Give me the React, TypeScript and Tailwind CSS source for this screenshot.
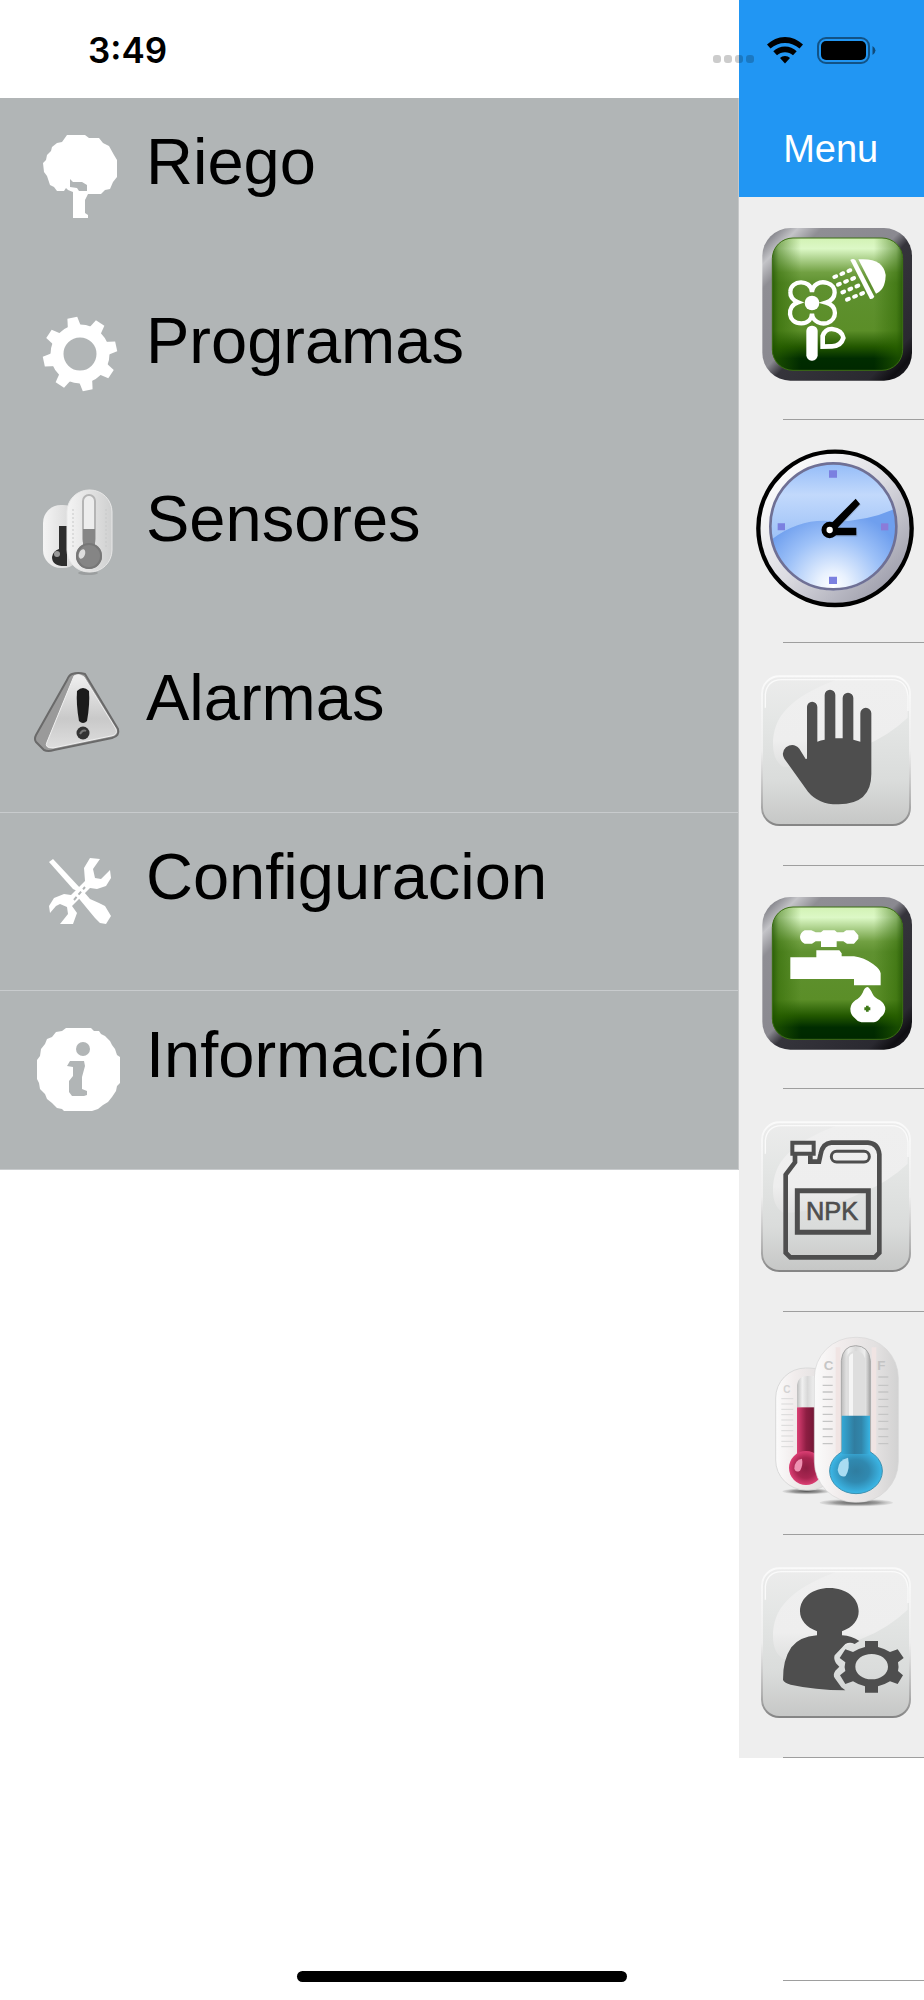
import React from 'react';

const toothAngles = [-12, 33, 78, 123, 168, 213, 258, 303];

function TreeIcon() {
  return (
    <svg viewBox="0 0 96 96" className="size-24 shrink-0" aria-hidden="true">
      <path
        fill="#fff"
        fillRule="evenodd"
        d="M37 9H55L59 12H69L73 17L79 20L84 29L87 34V51L83 56L80 63L75 64L71 68H62L58 68L55 74V87L58 89V92H43V66L38 64L36 62L34 65H27L24 61L20 59L17 50L14 46L13 37L16 34L17 29L21 25L22 21L27 17L32 16ZM40 53L43 56H52L57 59V65H49L47 62L40 61Z"
      />
    </svg>
  );
}

function GearIcon() {
  return (
    <svg viewBox="0 0 96 96" className="size-24 shrink-0" aria-hidden="true">
      <circle cx="50" cy="49" r="23" fill="none" stroke="#fff" strokeWidth="13" />
      {toothAngles.map((angle) => (
        <path key={angle} d="M43 24L45 12H55L57 24Z" fill="#fff" transform={`rotate(${angle} 50 49)`} />
      ))}
    </svg>
  );
}

function ThermometerIcon() {
  return (
    <svg viewBox="0 0 96 96" className="size-24 shrink-0" aria-hidden="true">
      <defs>
        <linearGradient id="grayBody" x1="0" x2="1">
          <stop offset="0" stopColor="#f4f4f4" />
          <stop offset="0.5" stopColor="#e2e2e2" />
          <stop offset="1" stopColor="#cfd0d0" />
        </linearGradient>
      </defs>
      <rect x="13" y="22" width="38" height="63" rx="18" fill="url(#grayBody)" />
      <path d="M29 43H37V83Q22 84 22 74Q23 68 29 66Z" fill="#2e2e2e" />
      <circle cx="27" cy="71" r="3" fill="#999" />
      <ellipse cx="58" cy="90" rx="10" ry="2" fill="#9b9e9f" />
      <rect x="37" y="7" width="45" height="82" rx="22" fill="url(#grayBody)" stroke="#e8e8e8" />
      <path d="M43 26V64M76 26V64" stroke="#c7c8c8" strokeDasharray="2 2" />
      <rect x="53" y="12" width="12" height="50" rx="6" fill="#ededed" stroke="#b5b5b5" strokeWidth="2" />
      <path d="M53 46H65V64H53Z" fill="#868686" />
      <circle cx="59" cy="73" r="13" fill="#858585" />
      <circle cx="59" cy="73" r="12" fill="none" stroke="#777" strokeWidth="2" />
      <ellipse cx="52" cy="71" rx="3" ry="5" fill="#ddd" transform="rotate(20 52 71)" />
    </svg>
  );
}

function WarningIcon() {
  return (
    <svg viewBox="0 0 96 96" className="size-24 shrink-0" aria-hidden="true">
      <defs>
        <linearGradient id="alertFace" x1="0" y1="0" x2="0" y2="1">
          <stop offset="0" stopColor="#f0f0f0" />
          <stop offset="0.6" stopColor="#c9c9c9" />
          <stop offset="1" stopColor="#dedede" />
        </linearGradient>
      </defs>
      <path d="M42 12Q48 10 55 12L88 67Q90 74 82 76L24 88Q18 90 14 88L6 80Q4 77 6 73L37 18Q39 13 42 12Z" fill="#9a9a9a" stroke="#6a6a6a" strokeWidth="2" strokeLinejoin="round" />
      <path d="M44 14Q49 11 54 15L86 67Q88 73 81 74L23 86Q14 86 17 80Z" fill="url(#alertFace)" stroke="#f1f1f1" strokeWidth="1" />
      <path d="M47 29Q53 23 59 29Q60 42 57 59Q53 63 49 59Q46 42 47 29Z" fill="#1b1b1b" />
      <circle cx="53" cy="71" r="6.5" fill="#333" />
      <path d="M50 72Q53 67 56 69" stroke="#777" strokeWidth="2" fill="none" />
    </svg>
  );
}

function ToolsIcon() {
  return (
    <svg viewBox="0 0 96 96" className="size-24 shrink-0" aria-hidden="true">
      <g fill="#fff">
        <path d="M19 21L23 18L52 49L47 50L43 48Z" />
        <path d="M46 54L54 51L60 58L69 62L75 65L81 75L76 83L70 82L65 77L60 71Z" />
        <path d="M60 17L70 18L63 28L65 37L71 38L80 29L81 37L76 45L67 48L60 47L42 65L47 72L43 83L30 83L38 73L37 66L30 63L26 65L20 72L19 65L24 57L34 53L41 54L55 40L54 27Z" />
      </g>
      <path d="M44 59L55 46" stroke="#b1b5b6" strokeWidth="2" strokeDasharray="4 3" />
    </svg>
  );
}

function InfoIcon() {
  return (
    <svg viewBox="0 0 96 96" className="size-24 shrink-0" aria-hidden="true">
      <path
        fill="#fff"
        d="M36 9H61L64 12H69L71 15L75 17L80 22L82 26L85 30L87 36L90 38V64L87 67L86 72L82 78L78 83L73 86L68 90L62 92H34L32 90L27 89L22 84L17 80L15 75L10 70L9 64L7 60V41L10 37L11 30L15 25L17 20L22 18L26 13L32 12Z"
      />
      <circle cx="53" cy="30" r="7" fill="#b1b5b6" />
      <path d="M40 42H54L55 47L52 58V70L57 72V76L54 77H42L39 73V62L43 57V48L37 47Z" fill="#b1b5b6" />
    </svg>
  );
}

function GreenTile({ children }: { children: React.ReactNode }) {
  return (
    <svg viewBox="0 0 480 480" className="size-40" aria-hidden="true">
      <defs>
        <linearGradient id="rim" x1="0" y1="0" x2="1" y2="1">
          <stop offset="0" stopColor="#8d8d93" />
          <stop offset="0.06" stopColor="#8d8d93" />
          <stop offset="0.12" stopColor="#c4c4c8" />
          <stop offset="0.2" stopColor="#8f8e94" />
          <stop offset="0.47" stopColor="#8a8990" />
          <stop offset="0.53" stopColor="#35343b" />
          <stop offset="0.85" stopColor="#2a2930" />
          <stop offset="0.92" stopColor="#0f0e12" />
          <stop offset="1" stopColor="#2a2930" />
        </linearGradient>
        <linearGradient id="green" x1="0" y1="0" x2="0" y2="1">
          <stop offset="0" stopColor="#d2f2b4" />
          <stop offset="0.08" stopColor="#dcf8c6" />
          <stop offset="0.26" stopColor="#71a042" />
          <stop offset="0.34" stopColor="#5f9130" />
          <stop offset="0.7" stopColor="#5b8e28" />
          <stop offset="0.82" stopColor="#235800" />
          <stop offset="0.91" stopColor="#002c00" />
          <stop offset="1" stopColor="#002800" />
        </linearGradient>
        <linearGradient id="greenSides" x1="0" x2="1">
          <stop offset="0" stopColor="#1f5200" stopOpacity="0.8" />
          <stop offset="0.05" stopColor="#2c6500" stopOpacity="0.5" />
          <stop offset="0.22" stopColor="#2c6500" stopOpacity="0" />
          <stop offset="0.78" stopColor="#2c6500" stopOpacity="0" />
          <stop offset="0.95" stopColor="#2c6500" stopOpacity="0.5" />
          <stop offset="1" stopColor="#1f5200" stopOpacity="0.8" />
        </linearGradient>
      </defs>
      <rect x="22" y="9" width="449" height="458" rx="84" fill="url(#rim)" />
      <rect x="52" y="39" width="391" height="397" rx="62" fill="url(#green)" />
      <rect x="52" y="39" width="391" height="397" rx="62" fill="url(#greenSides)" stroke="#3b6d14" strokeWidth="3" />
      {children}
    </svg>
  );
}

function GlassTile({ children }: { children: React.ReactNode }) {
  return (
    <svg viewBox="0 0 480 480" className="size-40" aria-hidden="true">
      <defs>
        <linearGradient id="glass" x1="0" y1="0" x2="0" y2="1">
          <stop offset="0" stopColor="#ececec" />
          <stop offset="0.3" stopColor="#e4e6e5" />
          <stop offset="0.7" stopColor="#dadcdb" />
          <stop offset="1" stopColor="#c6c7c6" />
        </linearGradient>
        <linearGradient id="glassEdge" x1="0" y1="0" x2="0" y2="1">
          <stop offset="0" stopColor="#fafafa" />
          <stop offset="0.5" stopColor="#eeeeee" />
          <stop offset="0.85" stopColor="#b0b0b0" />
          <stop offset="1" stopColor="#858585" />
        </linearGradient>
        <linearGradient id="shine" x1="0" y1="0" x2="0" y2="1">
          <stop offset="0" stopColor="#efefef" />
          <stop offset="0.7" stopColor="#eeeeee" />
          <stop offset="1" stopColor="#e4e4e4" stopOpacity="0.6" />
        </linearGradient>
      </defs>
      <rect x="21" y="16" width="444" height="446" rx="52" fill="url(#glass)" stroke="url(#glassEdge)" strokeWidth="6" />
      <path
        d="M250 24H410Q458 26 458 70V140Q400 195 325 225Q200 285 85 288Q54 270 54 220C54 140 100 80 250 24Z"
        fill="url(#shine)"
      />
      <path d="M31 110V70Q36 27 80 26H410Q454 27 459 75V120" fill="none" stroke="#fafafa" strokeWidth="4" />
      {children}
    </svg>
  );
}

function FlowerArt() {
  return (
    <GreenTile>
      <g transform="translate(-51 -75)">
        <path
          d="M222 276C218 235 158 240 157 275C156 292 168 302 180 307C145 318 148 370 190 370C212 370 221 356 222 341C224 366 250 374 268 369C298 358 300 318 264 308C298 298 298 258 268 249C245 242 224 254 222 276Z"
          fill="none"
          stroke="#fff"
          strokeWidth="13"
        />
        <circle cx="222" cy="309" r="22" fill="#fff" />
        <rect x="205" y="377" width="34" height="105" rx="16" fill="#fff" />
        <path d="M254 440V408Q262 386 282 387Q312 390 316 414Q308 440 280 439Z" fill="none" stroke="#fff" strokeWidth="14" />
        <path d="M337 180Q345 174 352 180L409 290Q404 299 396 297Z" fill="#fff" />
        <path d="M361 178Q436 172 443 225Q442 270 414 281Z" fill="#fff" />
        <path d="M289 231L343 208M300 254L354 232M313 277L365 255M327 299L378 278" stroke="#fff" strokeWidth="12" strokeLinecap="round" strokeDasharray="6 17" />
      </g>
    </GreenTile>
  );
}

function TapArt() {
  return (
    <GreenTile>
      <g transform="translate(-51 -72)" fill="#fff">
        <path d="M200 181H220L233 187H249L256 181H290L297 187H316L325 181H348L361 196V206L348 221H327L316 214H296V231H249V214H233L222 221H200Q187 215 186 201Q187 187 200 181Z" />
        <path d="M157 262H235V241H304L311 250V259H348Q378 263 405 282Q427 298 428 310V346H348V327H157Z" />
        <path d="M388 351Q395 352 404 372Q410 384 426 391Q442 402 442 418Q440 434 428 442Q420 455 408 457H370Q358 455 350 444Q337 434 337 416Q339 400 352 391Q366 384 374 368Q380 352 388 351Z" />
        <path d="M384 407H392V412H397V421H392V425H384V421H379V412H384Z" fill="#3f7a18" />
      </g>
    </GreenTile>
  );
}

function ClockArt() {
  return (
    <svg viewBox="51 54 480 480" className="size-40" aria-hidden="true">
      <defs>
        <linearGradient id="bezel" x1="0" y1="0" x2="1" y2="1">
          <stop offset="0.1" stopColor="#ffffff" />
          <stop offset="0.5" stopColor="#dcdce2" />
          <stop offset="0.9" stopColor="#9a9aa8" />
        </linearGradient>
        <linearGradient id="dialTop" x1="0" y1="0" x2="0" y2="1">
          <stop offset="0" stopColor="#94bcf8" />
          <stop offset="0.25" stopColor="#c2d9fc" />
          <stop offset="0.6" stopColor="#9dc2f7" />
          <stop offset="1" stopColor="#8cb6f4" />
        </linearGradient>
        <radialGradient id="dialBottom" gradientUnits="userSpaceOnUse" cx="285" cy="470" r="230">
          <stop offset="0" stopColor="#ffffff" />
          <stop offset="0.2" stopColor="#e8f1fe" />
          <stop offset="0.65" stopColor="#9dc1f8" />
          <stop offset="1" stopColor="#6f9fee" />
        </radialGradient>
      </defs>
      <circle cx="291" cy="295" r="230" fill="url(#bezel)" stroke="#000" strokeWidth="13" />
      <circle cx="286" cy="289" r="189" fill="url(#dialTop)" />
      <path d="M104 326Q190 262 288 274Q380 276 468 238A189 189 0 1 1 101 326Z" fill="url(#dialBottom)" />
      <circle cx="286" cy="289" r="189" fill="none" stroke="#6f7095" strokeWidth="8" />
      <path d="M273 121H297V143H273ZM273 440H297V462H273ZM119 280H141V301H119Z" fill="#7b80e0" />
      <path d="M429 280H451V301H429Z" fill="#8b7bd9" />
      <path d="M280 305H358V320H280ZM275 298L358 213L369 224L290 308Z" fill="#7c93b8" opacity="0.4" />
      <path d="M280 293H355V316H280ZM268 292L353 206L366 222L286 307Z" />
      <circle cx="275" cy="300" r="17" fill="#fff" stroke="#000" strokeWidth="15" />
    </svg>
  );
}

function HandArt() {
  return (
    <GlassTile>
      <path
        transform="translate(-51 -63)"
        fill="#4e4e4e"
        d="M207 326V171A15 15 0 0 1 238 171V275Q248 271 260 269V135A16 16 0 0 1 292 135V265H314V144A16 16 0 0 1 346 144V269L367 275V190A16 16 0 0 1 400 190V372Q400 462 302 463Q242 464 210 425L139 326Q128 307 144 292Q166 276 184 296L203 327Z"
      />
    </GlassTile>
  );
}

function CanisterArt() {
  return (
    <GlassTile>
      <g transform="translate(-51 -51)" fill="none" stroke="#4e4e4e">
        <path d="M163 128H227V161H163Z" strokeWidth="12" />
        <path d="M171 165V187L143 224V458L157 472H410L424 458V163Q420 130 390 128H280Q254 130 248 162L243 185H217V166" strokeWidth="14" />
        <rect x="280" y="154" width="114" height="32" rx="16" strokeWidth="9" />
        <path d="M178 272H391V397H178Z" strokeWidth="15" />
        <text x="282" y="360" textAnchor="middle" fontSize="76" fontFamily="Liberation Sans, Arial, sans-serif" fill="#4e4e4e" strokeWidth="2">
          NPK
        </text>
      </g>
    </GlassTile>
  );
}

function ThermometerArt() {
  return (
    <svg viewBox="51 90 480 480" className="size-40 overflow-visible" aria-hidden="true">
      <defs>
        <linearGradient id="body" x1="0" x2="1">
          <stop offset="0" stopColor="#fbfbfb" />
          <stop offset="0.3" stopColor="#f1ecec" />
          <stop offset="0.75" stopColor="#e2e0e0" />
          <stop offset="1" stopColor="#d2d2d2" />
        </linearGradient>
        <linearGradient id="tube" x1="0" x2="1">
          <stop offset="0" stopColor="#bcbcbc" />
          <stop offset="0.25" stopColor="#f0f0f0" />
          <stop offset="0.5" stopColor="#d8d8d8" />
          <stop offset="0.8" stopColor="#ededed" />
          <stop offset="1" stopColor="#a5a5a5" />
        </linearGradient>
        <linearGradient id="pink" x1="0" x2="1">
          <stop offset="0" stopColor="#dc3f74" />
          <stop offset="0.5" stopColor="#8e1e43" />
          <stop offset="1" stopColor="#6f1733" />
        </linearGradient>
        <radialGradient id="pinkBulb">
          <stop offset="0" stopColor="#8e1e43" />
          <stop offset="0.6" stopColor="#a82550" />
          <stop offset="1" stopColor="#dc3f74" />
        </radialGradient>
        <linearGradient id="blue" x1="0" x2="1">
          <stop offset="0" stopColor="#33a9d6" />
          <stop offset="0.45" stopColor="#307da0" />
          <stop offset="0.7" stopColor="#3186ab" />
          <stop offset="1" stopColor="#38b4e3" />
        </linearGradient>
        <radialGradient id="blueBulb">
          <stop offset="0" stopColor="#2f7da0" />
          <stop offset="0.5" stopColor="#3089b0" />
          <stop offset="1" stopColor="#3cb8e8" />
        </radialGradient>
        <radialGradient id="shadow">
          <stop offset="0" stopColor="#555" />
          <stop offset="0.6" stopColor="#888" stopOpacity="0.8" />
          <stop offset="1" stopColor="#bbb" stopOpacity="0.3" />
        </radialGradient>
      </defs>
      <ellipse cx="205" cy="544" rx="72" ry="9" fill="url(#shadow)" />
      <rect x="113" y="174" width="190" height="366" rx="90" fill="url(#body)" stroke="#dadada" strokeWidth="3" />
      <path d="M177 292V225Q180 198 208 198H240V292Z" fill="url(#tube)" />
      <path d="M177 292H232V440H177Z" fill="url(#pink)" />
      <circle cx="204" cy="474" r="51" fill="url(#pinkBulb)" />
      <path d="M169 475Q170 450 192 446Q196 465 186 482Q172 490 169 475Z" fill="#ee92b2" />
      <path d="M130 266H166M130 282H166M130 298H166M130 314H166M130 330H166M130 346H166M130 362H166M130 378H166M130 394H166M130 410H166" stroke="#d9d9d9" strokeWidth="3" />
      <text x="136" y="249" fontSize="30" fontWeight="700" fontFamily="Liberation Sans, Arial, sans-serif" fill="#d3d3d3">C</text>
      <ellipse cx="355" cy="578" rx="110" ry="11" fill="url(#shadow)" />
      <rect x="229" y="82" width="252" height="495" rx="122" fill="url(#body)" stroke="#d6d6d6" strokeWidth="2" />
      <path d="M300 112V430M408 112V430" stroke="#f0e4e3" strokeWidth="14" />
      <path d="M310 430V152Q314 108 353 107Q393 108 397 152V430Z" fill="url(#tube)" stroke="#a7a7a7" strokeWidth="3" />
      <path d="M325 318V145Q330 124 352 123Q376 124 381 145V318Z" fill="#dedede" />
      <path d="M333 318V140Q336 132 345 130V318Z" fill="#f5f5f5" />
      <ellipse cx="354" cy="483" rx="79" ry="68" fill="url(#blueBulb)" stroke="#3c90b0" strokeWidth="3" />
      <path d="M311 317H396V432H311Z" fill="url(#blue)" />
      <path d="M299 480Q302 448 330 443Q337 475 323 498Q304 505 299 480Z" fill="#a9dcf2" />
      <path d="M254 201H284M254 226H284M254 246H284M254 268H284M254 290H284M254 313H284M254 334H284M254 357H284M254 380H284M254 401H284M421 201H451M421 226H451M421 246H451M421 268H451M421 290H451M421 313H451M421 334H451M421 357H451M421 380H451M421 401H451" stroke="#c5c5c5" strokeWidth="4" />
      <text x="257" y="180" fontSize="40" fontWeight="700" fontFamily="Liberation Sans, Arial, sans-serif" fill="#c6c6c6">C</text>
      <text x="418" y="180" fontSize="40" fontWeight="700" fontFamily="Liberation Sans, Arial, sans-serif" fill="#c3c3c3">F</text>
    </svg>
  );
}

function UserArt() {
  return (
    <GlassTile>
      <g transform="translate(-51 -69)" fill="#4e4e4e">
        <path d="M274 144C324 144 362 173 362 214C362 240 345 262 312 274V286Q342 288 364 303L350 312Q336 304 322 312L290 346Q286 356 294 370L304 380L292 392Q284 404 290 414L310 442L322 451Q230 450 158 434Q140 430 135 420Q134 360 160 322Q184 290 237 286V274C205 262 186 240 186 214C186 173 224 144 274 144Z" />
        <path
          fillRule="evenodd"
          d="M381 303H420V321Q440 326 456 336L479 328L497 354L480 367Q483 380 480 393L495 406L479 432L456 424Q440 434 420 439V458H381V439Q360 434 345 424L322 432L306 406L322 393Q318 380 322 367L305 354L322 328L345 336Q360 326 381 321ZM401 342C374 342 352 358 352 380C352 402 374 418 401 418C428 418 450 402 450 380C450 358 428 342 401 342Z"
        />
      </g>
    </GlassTile>
  );
}

const menuItems = [
  { label: 'Riego', Icon: TreeIcon, divider: false },
  { label: 'Programas', Icon: GearIcon, divider: false },
  { label: 'Sensores', Icon: ThermometerIcon, divider: false },
  { label: 'Alarmas', Icon: WarningIcon, divider: true },
  { label: 'Configuracion', Icon: ToolsIcon, divider: true },
  { label: 'Información', Icon: InfoIcon, divider: true },
];

const shortcuts = [
  { label: 'Riego', Art: FlowerArt },
  { label: 'Programas', Art: ClockArt },
  { label: 'Manual', Art: HandArt },
  { label: 'Válvulas', Art: TapArt },
  { label: 'Fertilizante', Art: CanisterArt },
  { label: 'Sensores', Art: ThermometerArt },
  { label: 'Usuario', Art: UserArt },
];

function StatusBar() {
  return (
    <div className="absolute inset-x-0 top-0 flex h-[100px] items-center justify-between pr-12 pl-[88px]">
      <span className="font-['Inter',sans-serif] text-[35px] leading-10 font-semibold">3:49</span>
      <div className="flex items-center">
        <div className="mt-[18px] mr-[13px] flex gap-[3px]">
          {[0, 1, 2, 3].map((dot) => (
            <span key={dot} className="size-2 rounded-[3px] bg-black/20" />
          ))}
        </div>
        <svg viewBox="0 0 36 27" className="mr-[14px] h-[27px] w-9" aria-hidden="true">
          <path d="M18 0C25 0 31 3 36 7.5L32.5 11.5C28.5 8 23.5 6 18 6S7.5 8 3.5 11.5L0 7.5C5 3 11 0 18 0Z" />
          <path d="M18 9.5C22.5 9.5 26.5 11.2 29.7 14.2L26 18.3C23.8 16.5 21 15.3 18 15.3S12.2 16.5 10 18.3L6.3 14.2C9.5 11.2 13.5 9.5 18 9.5Z" />
          <path d="M18 19C20 19 21.7 19.7 23 21L18 26.5L13 21C14.3 19.7 16 19 18 19Z" />
        </svg>
        <svg viewBox="0 0 59 27" className="h-[27px] w-[59px]" aria-hidden="true">
          <rect x="1" y="1" width="51" height="25" rx="8" fill="none" stroke="#000" strokeOpacity="0.45" strokeWidth="2" />
          <rect x="4" y="4" width="45" height="19" rx="5" />
          <path d="M55.5 9Q58.5 11 58.5 13.5T55.5 18Z" fillOpacity="0.5" />
        </svg>
      </div>
    </div>
  );
}

export default function App() {
  return (
    <main className="relative grid min-h-screen grid-cols-[4fr_1fr] items-start bg-white font-['Liberation_Sans',Arial,sans-serif] text-black">
      <nav className="mt-[98px] grid min-h-[1072px] auto-rows-fr border-r border-[#c6c8c9] bg-[#b1b5b6]">
        {menuItems.map(({ label, Icon, divider }) => (
          <a
            key={label}
            href="#"
            className={`flex items-start gap-5 border-b pt-7 pl-[30px] ${divider ? 'border-[#c8cbcd]' : 'border-transparent'}`}
          >
            <Icon />
            <span className="text-[65px] leading-[72px]">{label}</span>
          </a>
        ))}
      </nav>

      <section className="min-w-0">
        <header className="flex h-[197px] items-end bg-[#2196f3] pb-6 pl-11">
          <h1 className="text-[38px] leading-[48px] font-normal text-white">Menu</h1>
        </header>
        <ul>
          {shortcuts.map(({ label, Art }) => (
            <li key={label} className="bg-[#eeeeee]">
              <button type="button" aria-label={label} className="flex h-[222px] w-full items-start pt-7 pl-4">
                <Art />
              </button>
              <div className="ml-11 h-px bg-[#9e9e9e]" />
            </li>
          ))}
          <li>
            <div className="h-[222px]" />
            <div className="ml-11 h-px bg-[#9e9e9e]" />
          </li>
        </ul>
      </section>

      <StatusBar />
      <div className="absolute bottom-[18px] left-1/2 h-[11px] w-[330px] -translate-x-1/2 rounded-full bg-black" />
    </main>
  );
}
